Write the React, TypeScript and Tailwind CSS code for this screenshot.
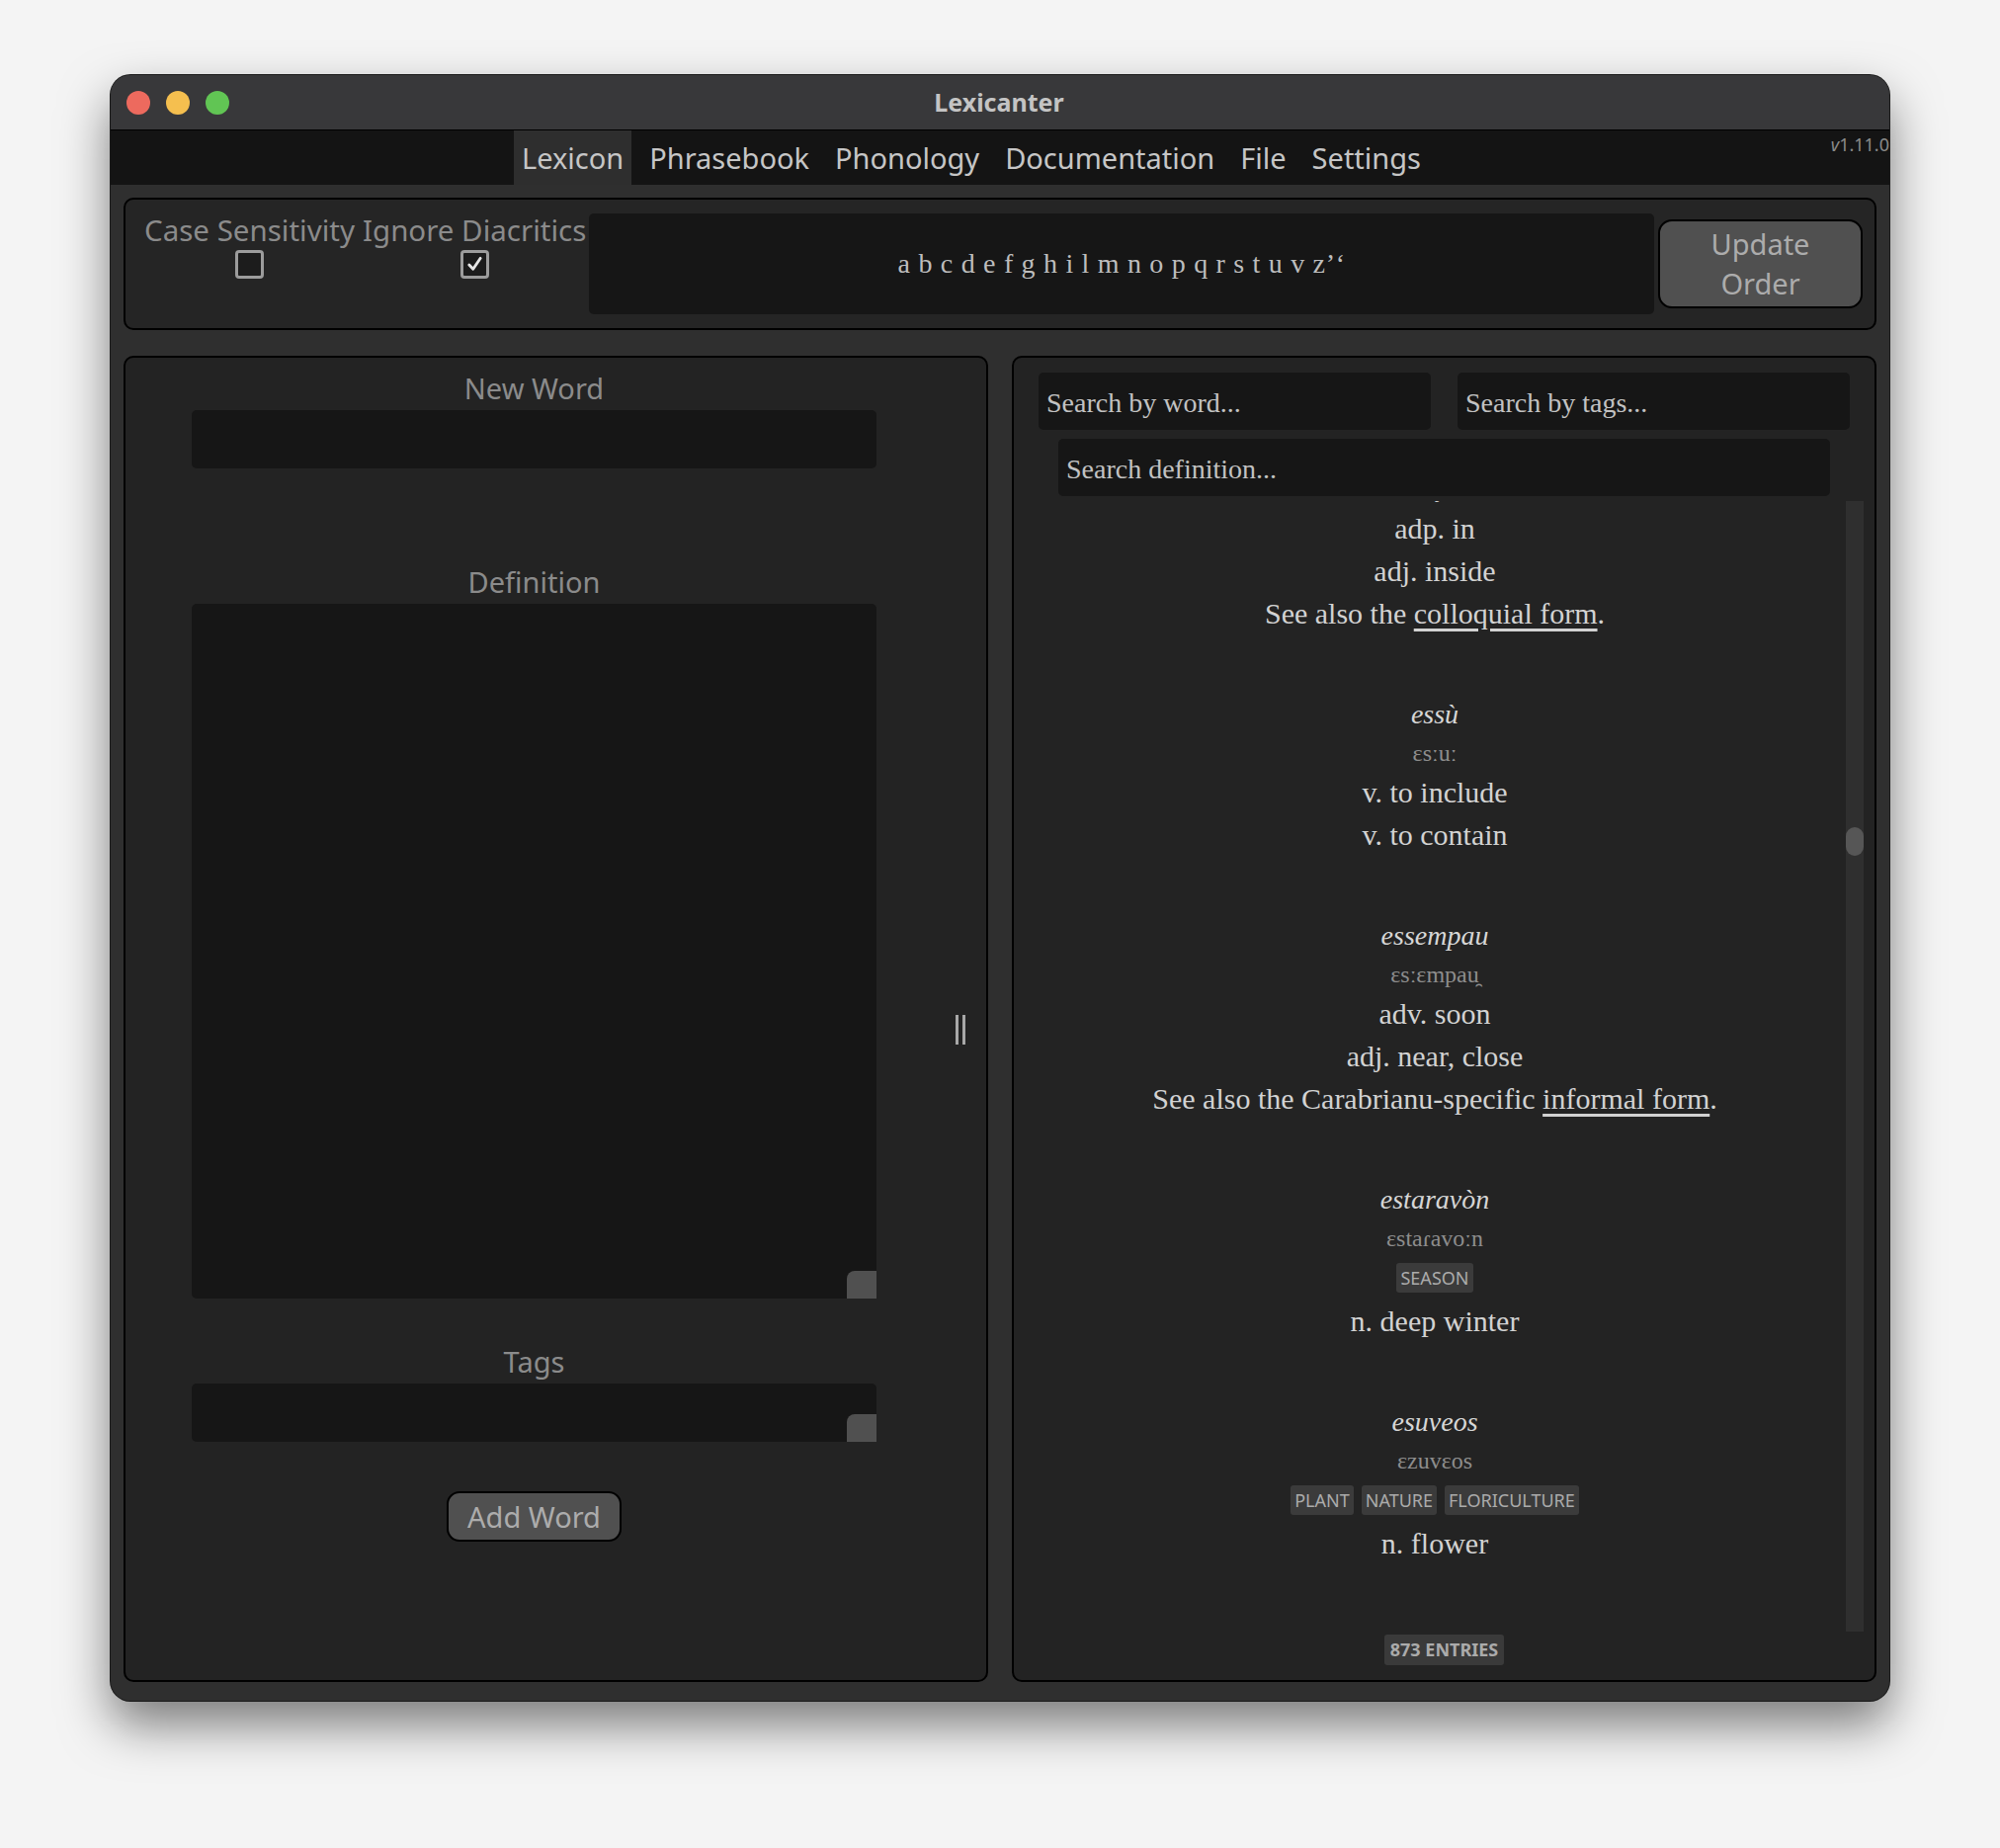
import type { ReactNode } from 'react'

const sans = { fontFamily: '"Noto Sans", "Open Sans", sans-serif' }
const serif = { fontFamily: '"Liberation Serif", "DejaVu Serif", serif' }

type Entry = {
  word: string
  ipa: string
  tags?: string[]
  defs: ReactNode[]
}

const entries: Entry[] = [
  {
    word: 'essù',
    ipa: 'ɛsːuː',
    defs: ['v. to include', 'v. to contain'],
  },
  {
    word: 'essempau',
    ipa: 'ɛsːɛmpau̯',
    defs: [
      'adv. soon',
      'adj. near, close',
      <>
        See also the Carabrianu-specific <span className="underline underline-offset-[5px]">informal form</span>.
      </>,
    ],
  },
  {
    word: 'estaravòn',
    ipa: 'ɛstaɾavoːn',
    tags: ['SEASON'],
    defs: ['n. deep winter'],
  },
  {
    word: 'esuveos',
    ipa: 'ɛzuvɛos',
    tags: ['PLANT', 'NATURE', 'FLORICULTURE'],
    defs: ['n. flower'],
  },
]

function Checkbox({ checked }: { checked?: boolean }) {
  return (
    <div className="flex h-[29px] w-[29px] items-center justify-center rounded-[4px] border-[3px] border-[#9c9c9c] bg-[#1c1c1c]">
      {checked && (
        <svg width="19" height="19" viewBox="0 0 20 20">
          <path d="M4 10.5 L8.2 15 L16 3.5" fill="none" stroke="#e6e6e6" strokeWidth="3" strokeLinecap="round" strokeLinejoin="round" />
        </svg>
      )}
    </div>
  )
}

function Tag({ children }: { children: ReactNode }) {
  return (
    <span className="rounded-[3px] bg-[#3b3b3b] px-[4px] text-[18px] leading-[30px] text-[#ababab]" style={sans}>
      {children}
    </span>
  )
}

function Field({ label, height, handle }: { label: string; height: string; handle?: boolean }) {
  return (
    <div className="flex flex-col">
      <div className="text-center text-[29px] leading-[36px] text-[#8b8b8b]">{label}</div>
      <div className={`relative mt-[4px] rounded-[5px] bg-[#161616] ${height}`}>
        {handle && <span className="absolute right-0 bottom-0 h-[28px] w-[30px] rounded-tl-[8px] bg-[#505050]" />}
      </div>
    </div>
  )
}

function LeftPanel() {
  return (
    <div className="flex h-[1342px] w-[875px] rounded-[10px] border-2 border-black bg-[#232323]" style={sans}>
      <div className="ml-[67px] flex w-[693px] flex-col pt-[13px]">
        <Field label="New Word" height="h-[59px]" />
        <div className="mt-[97px]">
          <Field label="Definition" height="h-[703px]" handle />
        </div>
        <div className="mt-[46px]">
          <Field label="Tags" height="h-[59px]" handle />
        </div>
        <div className="mt-[50px] flex justify-center">
          <button className="h-[51px] rounded-[13px] border-2 border-black bg-[#505050] px-[19px] text-[29px] leading-[44px] text-[#acacac]">
            Add Word
          </button>
        </div>
      </div>
      <div className="ml-[80px] flex items-center pt-[22px]">
        <div className="flex gap-[4px]">
          <span className="h-[30px] w-[3px] bg-[#a8a8a8]" />
          <span className="h-[30px] w-[3px] bg-[#a8a8a8]" />
        </div>
      </div>
    </div>
  )
}

function SearchInput({ placeholder, className }: { placeholder: string; className?: string }) {
  return (
    <input
      readOnly
      placeholder={placeholder}
      className={`h-[58px] rounded-[5px] bg-[#161616] px-[8px] pt-[3px] text-[28px] text-[#c2c2c2] outline-none placeholder:text-[#c2c2c2] ${className ?? ''}`}
      style={serif}
    />
  )
}

function EntryBlock({ entry }: { entry: Entry }) {
  return (
    <div className="mt-[60px] flex flex-col items-center">
      <div className="h-[42px] text-[28px] leading-[42px] text-[#d6d6d6] italic">{entry.word}</div>
      <div className="h-[36px] text-[24px] leading-[36px] text-[#8d8d8d]">{entry.ipa}</div>
      {entry.tags && (
        <div className="flex h-[44px] items-center gap-[8px]">
          {entry.tags.map((t) => (
            <Tag key={t}>{t}</Tag>
          ))}
        </div>
      )}
      {entry.defs.map((d, i) => (
        <div key={i} className="h-[43px] text-[30px] leading-[43px] text-[#d2d2d2]">
          {d}
        </div>
      ))}
    </div>
  )
}

function RightPanel() {
  return (
    <div className="flex h-[1342px] w-[875px] flex-col rounded-[10px] border-2 border-black bg-[#232323]">
      <div className="flex gap-[27px] px-[25px] pt-[15px]">
        <SearchInput placeholder="Search by word..." className="w-[397px]" />
        <SearchInput placeholder="Search by tags..." className="w-[397px]" />
      </div>
      <div className="mt-[9px] flex px-[45px]">
        <SearchInput placeholder="Search definition..." className="w-full" />
      </div>
      <div className="mt-[5px] flex h-[1144px]">
        <div className="flex-1 overflow-hidden pl-[10px]" style={serif}>
          <div className="-mt-[30px] flex flex-col items-center">
            <div className="h-[36px] text-[24px] leading-[36px] text-[#cfcfcf]">ɪnjɛ</div>
            <div className="h-[43px] text-[30px] leading-[43px] text-[#d2d2d2]">adp. in</div>
            <div className="h-[43px] text-[30px] leading-[43px] text-[#d2d2d2]">adj. inside</div>
            <div className="h-[43px] text-[30px] leading-[43px] text-[#d2d2d2]">
              See also the <span className="underline underline-offset-[5px]">colloquial form</span>.
            </div>
            {entries.map((e) => (
              <EntryBlock key={e.word} entry={e} />
            ))}
          </div>
        </div>
        <div className="mr-[11px] w-[18px] bg-[#2f2f2f]">
          <div className="mt-[330px] h-[29px] w-[18px] rounded-full bg-[#565656]" />
        </div>
      </div>
      <div className="mt-[3px] flex justify-center">
        <span className="rounded-[3px] bg-[#3a3a3a] px-[6px] text-[18px] leading-[31px] font-bold text-[#ababab]" style={sans}>
          873 ENTRIES
        </span>
      </div>
    </div>
  )
}

const tabs = ['Lexicon', 'Phrasebook', 'Phonology', 'Documentation', 'File', 'Settings']

export default function App() {
  return (
    <div className="h-[1870px] w-[2024px] bg-[#f4f4f4] pt-[76px] pl-[112px]">
      <div
        className="flex h-[1645px] w-[1800px] flex-col overflow-hidden rounded-[20px] bg-[#2f2f2f] shadow-[0_24px_50px_rgba(0,0,0,0.5)] ring-1 ring-[#1a1a1a]"
        style={sans}
      >
        {/* title bar */}
        <div className="relative flex h-[56px] items-center border-b border-black bg-[#38383a] pl-[16px]">
          <div className="flex gap-[16px]">
            <span className="h-[24px] w-[24px] rounded-full bg-[#ed6a5e]" />
            <span className="h-[24px] w-[24px] rounded-full bg-[#f5bf4f]" />
            <span className="h-[24px] w-[24px] rounded-full bg-[#61c554]" />
          </div>
          <div className="flex-1 pr-[122px] text-center text-[25px] font-bold text-[#c4c4c4]">Lexicanter</div>
        </div>

        {/* nav */}
        <div className="relative flex h-[55px] bg-[#141414] pl-[408px]">
          <div className="flex gap-[10px]">
            {tabs.map((t, i) => (
              <div
                key={t}
                className={`flex items-center px-[8px] text-[29px] text-[#c6c6c6] ${i === 0 ? 'bg-[#2e2e2e]' : ''}`}
              >
                {t}
              </div>
            ))}
          </div>
          <div className="absolute top-[1px] right-0 text-[18px] text-[#8a8a8a]">
            <i>v</i>1.11.0
          </div>
        </div>

        {/* body */}
        <div className="flex flex-1 flex-col px-[13px] pt-[13px] pb-[18px]">
          <div className="flex h-[134px] items-center rounded-[10px] border-2 border-black bg-[#252525] pl-[19px]">
            <div className="flex gap-[8px] self-start pt-[13px]">
              <div className="flex flex-col items-center">
                <div className="text-[29.5px] leading-[36px] text-[#8b8b8b]">Case Sensitivity</div>
                <div className="mt-[2px]">
                  <Checkbox />
                </div>
              </div>
              <div className="flex flex-col items-center">
                <div className="text-[29.5px] leading-[36px] text-[#8b8b8b]">Ignore Diacritics</div>
                <div className="mt-[2px]">
                  <Checkbox checked />
                </div>
              </div>
            </div>
            <div
              className="ml-[3px] flex h-[102px] flex-1 items-center justify-center rounded-[5px] bg-[#161616] text-[28px] tracking-[0.7px] text-[#bdbdbd]"
              style={serif}
            >
              a b c d e f g h i l m n o p q r s t u v z’‘
            </div>
            <button className="mr-[12px] ml-[4px] h-[90px] w-[207px] rounded-[14px] border-2 border-black bg-[#505050] text-[29px] leading-[40px] text-[#acacac]">
              Update
              <br />
              Order
            </button>
          </div>

          <div className="mt-[26px] flex gap-[24px]">
            <LeftPanel />
            <RightPanel />
          </div>
        </div>
      </div>
    </div>
  )
}
